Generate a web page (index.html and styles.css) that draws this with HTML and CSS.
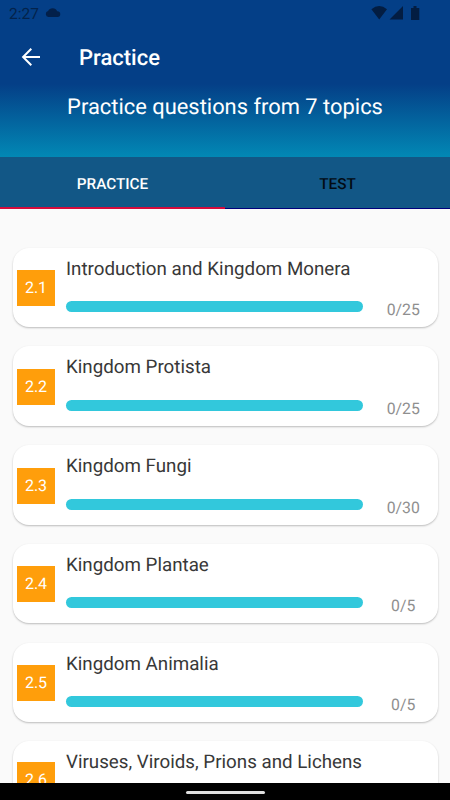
FILE: index.html
```html
<!DOCTYPE html>
<html lang="en">
<head>
<meta charset="utf-8">
<title>Practice</title>
<link rel="stylesheet" href="styles.css">
</head>
<body>
<div class="screen">
  <header class="header">
    <div class="status">
      <span class="time">2:27</span>
      <svg class="cloud" width="16" height="10" viewBox="0 0 16 10"><path d="M3.500 9a3 3 0 0 1-.4-5.900A5 5 0 0 1 12.200 3.200a2.900 2.900 0 0 1 .3 5.800z"/></svg>
      <svg class="signals" width="50" height="14" viewBox="0 0 50 14"><path d="M.4 3.200Q8.200-3 16 3.200L8.200 13.500zM18.500 13.500L32 0v13.500zM40 2h2.500V0h3v2H48.300v12H40z"/></svg>
    </div>
    <div class="appbar">
      <svg class="back" width="20" height="20" viewBox="0 0 20 20"><path d="M19 10H2.500M10.300 1.800L2.100 10l8.200 8.200"/></svg>
      <h1 class="title">Practice</h1>
    </div>
    <p class="subtitle">Practice questions from 7 topics</p>
  </header>
  <nav class="tabs">
    <div class="tab active"><span>PRACTICE</span></div>
    <div class="tab"><span>TEST</span></div>
  </nav>
  <main class="list">
    <article class="card"><div class="badge">2.1</div><h2 class="name">Introduction and Kingdom Monera</h2><div class="bar"></div><span class="count">0/25</span></article>
    <article class="card"><div class="badge">2.2</div><h2 class="name">Kingdom Protista</h2><div class="bar"></div><span class="count">0/25</span></article>
    <article class="card"><div class="badge">2.3</div><h2 class="name">Kingdom Fungi</h2><div class="bar"></div><span class="count">0/30</span></article>
    <article class="card"><div class="badge">2.4</div><h2 class="name">Kingdom Plantae</h2><div class="bar"></div><span class="count">0/5</span></article>
    <article class="card"><div class="badge">2.5</div><h2 class="name">Kingdom Animalia</h2><div class="bar"></div><span class="count">0/5</span></article>
    <article class="card"><div class="badge">2.6</div><h2 class="name">Viruses, Viroids, Prions and Lichens</h2><div class="bar"></div></article>
  </main>
  <footer class="navbar"><div class="handle"></div></footer>
</div>
</body>
</html>
```
FILE: styles.css
```css
* { box-sizing: border-box; }
body { margin: 0; font-family: Roboto, sans-serif; text-rendering: geometricPrecision; }
h1, h2, p { margin: 0; }
.screen {
  width: 450px;
  height: 800px;
  display: flex;
  flex-direction: column;
  overflow: hidden;
  background: #fafafa;
}
.header {
  flex: none;
  height: 157px;
  background: linear-gradient(#043f87 0, #043f87 84px, #0288b5 157px);
}
.status {
  display: flex;
  align-items: flex-start;
  height: 28px;
  padding: 0 29px 0 9px;
  color: #03234b;
}
.time { width: 36px; font-size: 15.5px; line-height: 28px; }
.cloud { margin-top: 8px; fill: #03204a; }
.signals { margin: 6px 0 0 auto; fill: #031d42; }
.appbar { display: flex; align-items: center; height: 58px; padding-left: 21px; }
.back { fill: none; stroke: #fff; stroke-width: 2; }
.title { margin: 3px 0 0 38px; color: #fff; font-size: 22px; font-weight: 500; line-height: 28px; }
.subtitle { margin-top: 8px; color: #fff; font-size: 21.9px; font-weight: 400; line-height: 28px; text-align: center; }
.tabs {
  flex: none;
  display: flex;
  height: 52px;
  background: #125786;
}
.tab {
  flex: 1;
  text-align: center;
  font-size: 15.3px;
  font-weight: 500;
  line-height: 54px;
  color: #020b14;
  border-bottom: 1px solid #00007c;
}
.tab.active { color: #fff; border-bottom: 2px solid #d50b3c; }
.list {
  flex: 1;
  min-height: 0;
  overflow: hidden;
  display: flex;
  flex-direction: column;
  gap: 19.3px;
  padding: 38.5px 12.5px 0;
}
.card {
  flex: none;
  height: 79.5px;
  display: grid;
  grid-template-columns: 49px 297px 1fr;
  grid-template-rows: 41.5px 1fr;
  padding-left: 4.5px;
  border-radius: 16px;
  background: #fff;
  box-shadow: 0 1px 2px rgba(0, 0, 0, 0.25);
}
.badge {
  grid-row: 1 / 3;
  align-self: center;
  width: 38px;
  height: 36px;
  margin-bottom: 1.7px;
  background: #ff9e0b;
  color: #fff;
  font-size: 16px;
  line-height: 36px;
  text-align: center;
}
.name {
  grid-column: 2 / 4;
  color: #383838;
  font-size: 18.75px;
  font-weight: 400;
  line-height: 42.6px;
  white-space: nowrap;
}
.bar { height: 11px; margin-top: 12px; border-radius: 6px; background: #32c8dc; }
.count {
  color: #8f8f8f;
  font-size: 15.8px;
  font-weight: 400;
  line-height: 41px;
  text-align: center;
  padding-left: 6px;
}
.navbar { flex: none; height: 17px; background: #000; display: flex; justify-content: center; padding-top: 8px; }
.handle { width: 79px; height: 3px; border-radius: 2px; background: #dedede; }
```
